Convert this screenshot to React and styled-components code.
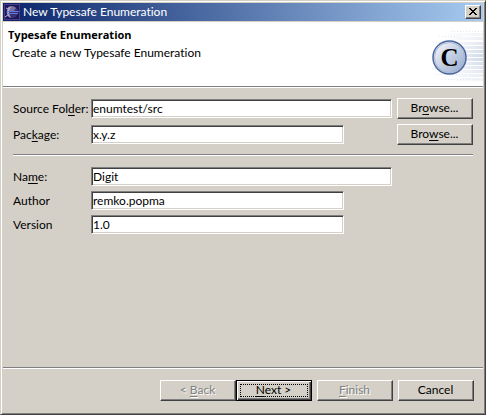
import React from "react";
import styled, { createGlobalStyle } from "styled-components";

const face = "#d4d0c8";
const shadow = "#808080";
const dark = "#404040";

const GlobalStyle = createGlobalStyle`
  *, *::before, *::after { box-sizing: border-box; }
  body { margin: 0; background: ${face}; }
  body, button, input {
    font-family: Lato, "Liberation Sans", sans-serif;
    font-size: 12px;
    font-variant-ligatures: none;
    line-height: 14px;
    color: #000;
  }
  u {
    text-decoration: underline;
    text-decoration-thickness: 1px;
    text-underline-offset: 2px;
    text-decoration-skip-ink: none;
  }
`;

const Dialog = styled.main`
  display: flex;
  flex-direction: column;
  min-height: 100vh;
  padding: 1px;
  background: ${face};
  border: 1px solid;
  border-color: ${face} ${dark} ${dark} ${face};
  box-shadow: inset 1px 1px #fff, inset -1px -1px ${shadow};
`;

const TitleBar = styled.header`
  display: flex;
  align-items: center;
  gap: 3px;
  height: 18px;
  margin: 1px 1px 0;
  padding: 0 2px 0 1px;
  background: linear-gradient(90deg, #0a246a, #a6caf0);
  color: #fff;
`;

const Title = styled.h1`
  flex: 1;
  margin: 0;
  font-size: 12px;
  font-weight: 400;
  line-height: 18px;
`;

const CloseButton = styled.button`
  display: grid;
  place-items: center;
  width: 16px;
  height: 14px;
  padding: 0 1px 1px 0;
  border: 1px solid;
  border-color: #fff ${dark} ${dark} #fff;
  background: ${face};
  box-shadow: inset -1px -1px ${shadow};
`;

const Banner = styled.section`
  display: flex;
  justify-content: space-between;
  height: 65px;
  margin: 1px 1px 0;
  background: #fff;
  border-bottom: 1px solid ${shadow};
  box-shadow: 0 1px #fff;
`;

const BannerText = styled.div`
  padding: 5px 0 0 5px;
`;

const BannerTitle = styled.h2`
  margin: 0;
  font-family: "Open Sans", "Noto Sans", sans-serif;
  font-size: 11px;
  font-weight: 700;
  line-height: 16px;
`;

const BannerMessage = styled.p`
  margin: 3px 0 0 4px;
`;

const Form = styled.form`
  flex: 1;
  display: flex;
  flex-direction: column;
  margin: 0 1px;
`;

const Fields = styled.div`
  flex: 1;
  padding: 11px 10px 0;
`;

const FieldRow = styled.div`
  display: grid;
  grid-template-columns: 78px 1fr 76px;
  align-items: center;
  margin-bottom: 5px;
`;

const Label = styled.label`
  white-space: nowrap;
`;

const TextField = styled.input`
  width: ${(p) => (p.$narrow ? "calc(100% - 53px)" : "calc(100% - 5px)")};
  height: 19px;
  padding: 0 0 1px 1px;
  border: 1px solid;
  border-color: ${shadow} #fff #fff ${shadow};
  border-radius: 0;
  background: #fff;
  box-shadow: inset 1px 1px ${dark}, inset -1px -1px ${face};
  outline: none;
`;

const Rule = styled.hr`
  height: 2px;
  margin: ${(p) => (p.$inset ? "9px 0 11px" : "0")};
  border: 0;
  border-top: 1px solid ${shadow};
  background: #fff;
`;

const Button = styled.button`
  position: relative;
  width: 76px;
  height: 21px;
  padding: 0 1px 1px 0;
  border: 1px solid;
  border-color: ${(p) => (p.$primary ? "#000" : `#fff ${dark} ${dark} #fff`)};
  border-radius: 0;
  background: ${face};
  box-shadow: ${(p) =>
    p.$primary
      ? `inset 1px 1px #fff, inset -1px -1px ${dark}, inset -2px -2px ${shadow}`
      : `inset -1px -1px ${shadow}`};
  white-space: nowrap;

  &:disabled {
    color: ${shadow};
    text-shadow: 1px 1px #fff;
  }

  &::after {
    content: ${(p) => (p.$primary ? '""' : "none")};
    position: absolute;
    inset: 3px;
    border: 1px dotted #000;
  }
`;

const Details = styled.div`
  ${FieldRow} { height: 19px; }
`;

const Footer = styled.footer`
  display: flex;
  justify-content: flex-end;
  gap: 5px;
  padding: 11px 9px 12px;
`;

const StepButtons = styled.div`
  display: flex;
`;

function EclipseIcon() {
  return (
    <svg width="16" height="16" viewBox="0 0 16 16" aria-hidden="true">
      <rect width="16" height="16" fill="#4b3a8c" />
      <rect x="1" y="1" width="14" height="14" fill="#1d1758" />
      <circle cx="8" cy="8" r="6" fill="#3a3474" />
      <path d="M4 3a6 6 0 0 1 8 1L10 7H5z" fill="#77709f" />
      <path d="M5 3Q1 8 5 13L7 14Q3 8 7 3z" fill="#b3abd6" />
      <path d="M3 7.500H15M4 9.500H14" stroke="#5d78d8" />
      <path d="M1 13l3-2M2 4l2 1" stroke="#b9a9dc" />
    </svg>
  );
}

const stripes = [11, 15, 20, 24, 28, 32, 36, 40, 44, 48, 52, 56];

function ClassBanner() {
  return (
    <svg width="56" height="64" viewBox="0 0 56 64" aria-hidden="true">
      <defs>
        <linearGradient id="fade" gradientUnits="userSpaceOnUse" x1="14" y1="0" x2="56" y2="0">
          <stop offset="0" stopColor="#d3dded" stopOpacity="0" />
          <stop offset="1" stopColor="#ccd7e8" />
        </linearGradient>
        <linearGradient id="ball" x1="0" y1="0" x2="1" y2="1">
          <stop offset="0.100" stopColor="#f4f7fc" />
          <stop offset="0.500" stopColor="#c3cfe3" />
          <stop offset="1" stopColor="#94a6c8" />
        </linearGradient>
      </defs>
      {stripes.map((y) => (
        <rect
          key={y}
          x="8"
          y={y}
          width="48"
          height="3"
          fill="url(#fade)"
          opacity={1 - Math.abs(y - 34) / 32}
        />
      ))}
      <path d="M24 9.500H56M12 14.500H36M6 20.500H30M5 46.500H30M8 52.500H40M18 57.500H56" stroke="#e3e9f3" strokeDasharray="1 2" />
      <circle cx="22.500" cy="35.500" r="16.500" fill="url(#ball)" stroke="#4c679f" strokeWidth="1.500" />
      <circle cx="22.500" cy="35.500" r="15" fill="none" stroke="#a9b8d4" />
      <text x="22.500" y="44" textAnchor="middle" fontFamily="Liberation Serif, serif" fontWeight="700" fontSize="25">C</text>
    </svg>
  );
}

function Field({ id, label, value, narrow, children }) {
  return (
    <FieldRow>
      <Label htmlFor={id}>{label}</Label>
      <TextField id={id} defaultValue={value} $narrow={narrow} spellCheck={false} />
      {children}
    </FieldRow>
  );
}

export default function App() {
  return (
    <>
      <GlobalStyle />
      <Dialog>
        <TitleBar>
          <EclipseIcon />
          <Title>New Typesafe Enumeration</Title>
          <CloseButton type="button" aria-label="Close">
            <svg width="8" height="7" viewBox="0 0 8 7" shapeRendering="crispEdges" aria-hidden="true">
              <path d="M0 0h2v1h1v1h2V1h1V0h2v1H7v1H6v1H5v1h1v1h1v1h1v1H6V6H5V5H3v1H2v1H0V6h1V5h1V4h1V3H2V2H1V1H0z" />
            </svg>
          </CloseButton>
        </TitleBar>
        <Banner>
          <BannerText>
            <BannerTitle>Typesafe Enumeration</BannerTitle>
            <BannerMessage>Create a new Typesafe Enumeration</BannerMessage>
          </BannerText>
          <ClassBanner />
        </Banner>
        <Form onSubmit={(e) => e.preventDefault()}>
          <Fields>
            <Field id="folder" label={<>Source Fol<u>d</u>er:</>} value="enumtest/src">
              <Button type="button">Br<u>o</u>wse...</Button>
            </Field>
            <Field id="package" label={<>Pac<u>k</u>age:</>} value="x.y.z" narrow>
              <Button type="button">Bro<u>w</u>se...</Button>
            </Field>
            <Rule $inset />
            <Details>
              <Field id="name" label={<>Na<u>m</u>e:</>} value="Digit" />
              <Field id="author" label="Author" value="remko.popma" narrow />
              <Field id="version" label="Version" value="1.0" narrow />
            </Details>
          </Fields>
          <Rule />
          <Footer>
            <StepButtons>
              <Button type="button" disabled>&lt; <u>B</u>ack</Button>
              <Button type="submit" $primary><u>N</u>ext &gt;</Button>
            </StepButtons>
            <Button type="button" disabled><u>F</u>inish</Button>
            <Button type="button">Cancel</Button>
          </Footer>
        </Form>
      </Dialog>
    </>
  );
}
